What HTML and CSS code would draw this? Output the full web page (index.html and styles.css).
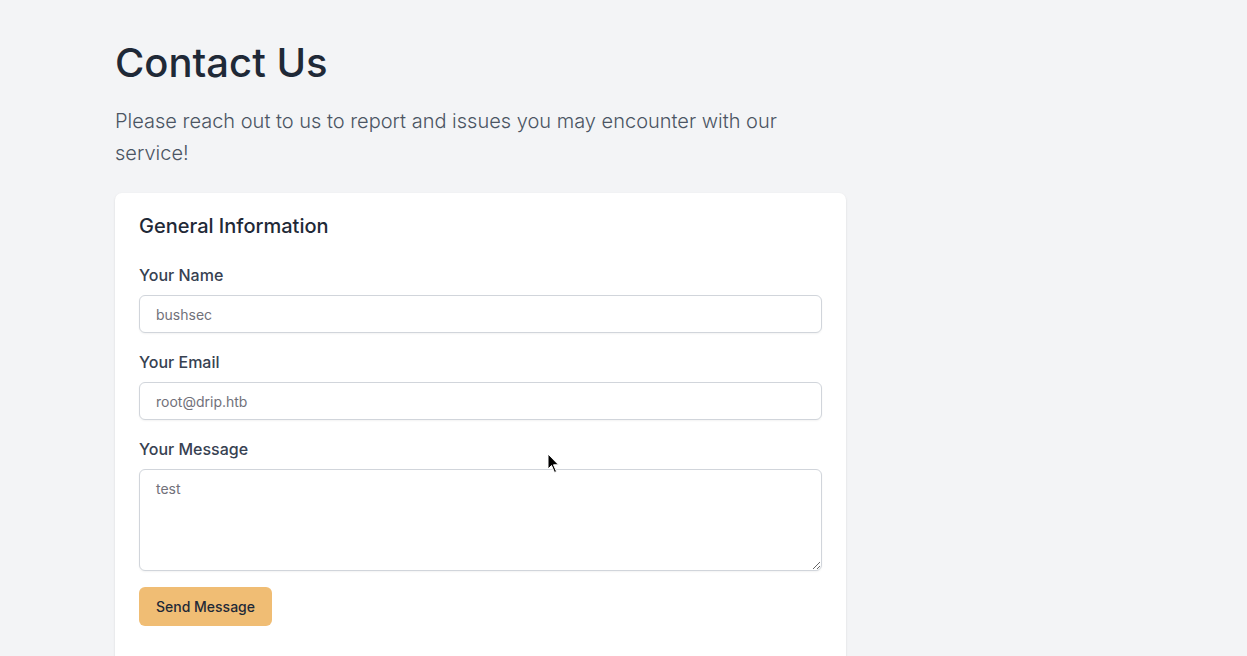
FILE: index.html
```html
<!DOCTYPE html>
<html lang="en">
<head>
<meta charset="utf-8">
<title>Contact Us</title>
<link rel="stylesheet" href="styles.css">
</head>
<body>
<main class="page">
  <h1 class="title">Contact Us</h1>
  <p class="lead">Please reach out to us to report and issues you may encounter with our service!</p>
  <section class="card">
    <h2 class="card-title">General Information</h2>
    <form class="form">
      <div class="field">
        <label class="label" for="name">Your Name</label>
        <input class="input" id="name" type="text" placeholder="bushsec">
      </div>
      <div class="field">
        <label class="label" for="email">Your Email</label>
        <input class="input" id="email" type="email" placeholder="root@drip.htb">
      </div>
      <div class="field">
        <label class="label" for="msg">Your Message</label>
        <textarea class="input textarea" id="msg" placeholder="test"></textarea>
      </div>
      <div class="actions">
        <button class="btn" type="button">Send Message</button>
      </div>
    </form>
  </section>
</main>
<svg class="cursor" width="13" height="21" viewBox="0 0 13 21"><path d="M1 1 L1 16 L4.5 12.5 L7.5 19.5 L9.5 18.5 L6.5 11.8 L11.5 11.8 Z" fill="#000" stroke="#fff" stroke-width="1"/></svg>
</body>
</html>
```
FILE: styles.css
```css
html, body {
  margin: 0;
  padding: 0;
  background: #f3f4f6;
  font-family: Inter, "Noto Sans", sans-serif;
  height: 100%;
  overflow: hidden;
}
.page {
  width: 731px;
  padding: 39px 0 0 115px;
}
.title {
  margin: 0;
  font-size: 40px;
  line-height: 48px;
  font-weight: 500;
  color: #1f2937;
}
.lead {
  margin: 18px 0 24px;
  font-size: 20px;
  line-height: 32px;
  color: #4b5563;
  font-weight: 300;
}
.card {
  background: #fff;
  border-radius: 7px;
  box-shadow: 0 1px 3px rgba(0,0,0,0.08), 0 1px 2px rgba(0,0,0,0.04);
  padding: 19px 24px 40px;
}
.card-title {
  margin: 0 0 23px;
  font-size: 20px;
  line-height: 28px;
  font-weight: 500;
  color: #1f2937;
}
.form {
  display: flex;
  flex-direction: column;
  gap: 17px;
}
.field {
  display: flex;
  flex-direction: column;
  gap: 8px;
}
.label {
  font-size: 16px;
  line-height: 24px;
  font-weight: 500;
  color: #374151;
}
.input {
  box-sizing: border-box;
  width: 100%;
  height: 38px;
  border: 1px solid #d1d5db;
  border-radius: 6px;
  padding: 0 16px;
  font-family: Inter, "Noto Sans", sans-serif;
  font-size: 14px;
  color: #111827;
  background: #fff;
  box-shadow: 0 1px 2px rgba(0,0,0,0.05);
  outline: none;
}
.input::placeholder {
  color: #71717a;
}
.textarea {
  height: 102px;
  padding: 9px 16px;
  line-height: 20px;
  resize: vertical;
  display: block;
}
.actions {
  margin-top: -1px;
}
.btn {
  height: 39px;
  padding: 0 17px;
  border: none;
  border-radius: 6px;
  background: #f0bd74;
  color: #1f2937;
  font-family: Inter, "Noto Sans", sans-serif;
  font-size: 14px;
  font-weight: 500;
}
.cursor {
  position: absolute;
  left: 547px;
  top: 453px;
}
```
